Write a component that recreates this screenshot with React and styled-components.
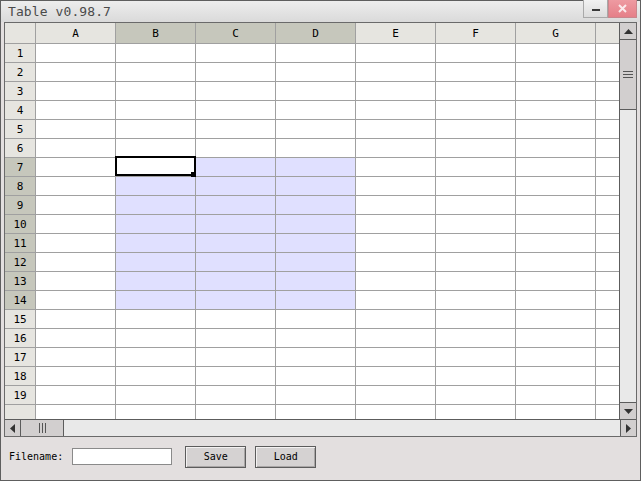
import React from 'react'
import styled, { createGlobalStyle } from 'styled-components'

const GlobalStyle = createGlobalStyle`
    html, body {
        margin: 0;
        padding: 0;
        background: #ffffff;
    }
    * {
        box-sizing: border-box;
    }
`;

const COLS = ['A', 'B', 'C', 'D', 'E', 'F', 'G']
const ROWS = Array.from({ length: 19 }, (_, i) => i + 1)

// selection B7:D14, active cell B7
const SEL = { c0: 1, c1: 3, r0: 7, r1: 14 }

const inSel = (c, r) => c >= SEL.c0 && c <= SEL.c1 && r >= SEL.r0 && r <= SEL.r1
const isActive = (c, r) => c === SEL.c0 && r === SEL.r0

function App() {
    return (
        <>
            <GlobalStyle />
            <Window>
                <TitleBar>
                    <Title>Table v0.98.7</Title>
                    <WinButtons>
                        <MinButton><span /></MinButton>
                        <CloseButton>
                            <svg width="9" height="9" viewBox="0 0 9 9">
                                <path d="M1 1 L8 8 M8 1 L1 8" stroke="#fbe9eb" strokeWidth="2" />
                            </svg>
                        </CloseButton>
                    </WinButtons>
                </TitleBar>

                <Frame>
                    <ScrollArea>
                        <Sheet>
                            <Corner />
                            {COLS.map((c, i) => (
                                <ColHead key={c} $sel={i >= SEL.c0 && i <= SEL.c1}>{c}</ColHead>
                            ))}
                            <ColHead $last />
                            {ROWS.map(r => (
                                <React.Fragment key={r}>
                                    <RowHead $sel={r >= SEL.r0 && r <= SEL.r1}>{r}</RowHead>
                                    {COLS.map((c, i) => (
                                        <Cell key={c} $sel={inSel(i, r)} $active={isActive(i, r)} />
                                    ))}
                                    <Cell $last />
                                </React.Fragment>
                            ))}
                            <RowHead $partial />
                            {COLS.map(c => <Cell key={c} $partial />)}
                            <Cell $last $partial />
                        </Sheet>

                        <VScroll>
                            <ArrowButton>
                                <svg width="9" height="5" viewBox="0 0 9 5"><path d="M0 5 L4.5 0 L9 5 Z" fill="#333" /></svg>
                            </ArrowButton>
                            <VThumb>
                                <svg width="10" height="7" viewBox="0 0 10 7">
                                    <path d="M0 0.5 H10 M0 3.5 H10 M0 6.5 H10" stroke="#555" strokeWidth="1" />
                                </svg>
                            </VThumb>
                            <Trough />
                            <ArrowButton $bottom>
                                <svg width="9" height="5" viewBox="0 0 9 5"><path d="M0 0 L4.5 5 L9 0 Z" fill="#333" /></svg>
                            </ArrowButton>
                        </VScroll>
                    </ScrollArea>

                    <HScroll>
                        <HArrow>
                            <svg width="5" height="9" viewBox="0 0 5 9"><path d="M5 0 L0 4.5 L5 9 Z" fill="#333" /></svg>
                        </HArrow>
                        <HThumb>
                            <svg width="7" height="10" viewBox="0 0 7 10">
                                <path d="M0.5 0 V10 M3.5 0 V10 M6.5 0 V10" stroke="#555" strokeWidth="1" />
                            </svg>
                        </HThumb>
                        <Trough />
                        <HArrow $right>
                            <svg width="5" height="9" viewBox="0 0 5 9"><path d="M0 0 L5 4.5 L0 9 Z" fill="#333" /></svg>
                        </HArrow>
                    </HScroll>
                </Frame>

                <FormBar>
                    <Label>Filename:</Label>
                    <FileInput type="text" defaultValue="" />
                    <Button $first>Save</Button>
                    <Button>Load</Button>
                </FormBar>
            </Window>
        </>
    )
}

const mono = `"DejaVu Sans Mono", "Liberation Mono", monospace`

const Window = styled.div`
    width: 641px;
    height: 481px;
    border: 1px solid #5e5e5e;
    background: #e3dfdf;
    display: flex;
    flex-direction: column;
    padding: 0 3px 0 3px;
`;

const TitleBar = styled.div`
    height: 21px;
    margin: 0 -3px;
    display: flex;
    justify-content: space-between;
    background: linear-gradient(#ededed, #dadada);
`;

const Title = styled.div`
    font-family: ${mono};
    font-size: 13px;
    color: #4a4a4a;
    padding: 3px 0 0 7px;
    letter-spacing: 0.1px;
`;

const WinButtons = styled.div`
    display: flex;
    height: 18px;
    margin-right: 3px;
    margin-top: -1px;
`;

const MinButton = styled.div`
    width: 25px;
    height: 18px;
    background: linear-gradient(#f2f2f2, #dcdcdc);
    border: 1px solid #a9a9a9;
    border-top: none;
    display: flex;
    align-items: center;
    justify-content: center;
    span {
        display: block;
        width: 8px;
        height: 2px;
        margin-top: 3px;
        background: #3a3a3a;
    }
`;

const CloseButton = styled.div`
    width: 29px;
    height: 18px;
    background: linear-gradient(#ee9aa1, #e57f88);
    border: 1px solid #c9868c;
    border-top: none;
    display: flex;
    align-items: center;
    justify-content: center;
`;

const Frame = styled.div`
    border: 1px solid #6a6a6a;
    display: flex;
    flex-direction: column;
`;

const ScrollArea = styled.div`
    display: flex;
    height: 396px;
`;

const Sheet = styled.div`
    display: grid;
    grid-template-columns: 31px repeat(7, 80px) 23px;
    grid-template-rows: 21px repeat(19, 19px) 14px;
    background: #ffffff;
    font-family: ${mono};
    font-size: 11px;
    color: #000;
`;

const headBase = `
    display: flex;
    align-items: center;
    justify-content: center;
    border-right: 1px solid #a0a0a0;
    border-bottom: 1px solid #a0a0a0;
`;

const Corner = styled.div`
    ${headBase}
    background: #e6e5e0;
`;

const ColHead = styled.div`
    ${headBase}
    background: ${p => (p.$sel ? '#c6c7bc' : '#e6e5e0')};
    border-right: ${p => (p.$last ? 'none' : '1px solid #a0a0a0')};
`;

const RowHead = styled.div`
    ${headBase}
    background: ${p => (p.$sel ? '#c6c7bc' : '#e6e5e0')};
    border-bottom: ${p => (p.$partial ? 'none' : '1px solid #a0a0a0')};
    padding-top: 1px;
`;

const Cell = styled.div`
    position: relative;
    background: ${p => (p.$sel && !p.$active ? '#e0e0ff' : '#ffffff')};
    border-right: ${p => (p.$last ? 'none' : '1px solid #a0a0a0')};
    border-bottom: ${p => (p.$partial ? 'none' : '1px solid #a0a0a0')};

    ${p => p.$active && `
        &::after {
            content: '';
            position: absolute;
            left: -1px;
            top: -2px;
            right: -1px;
            bottom: 0px;
            border: 2px solid #000;
        }
        &::before {
            content: '';
            position: absolute;
            right: -1px;
            bottom: -1px;
            width: 5px;
            height: 5px;
            background: #000;
            z-index: 1;
        }
    `}
`;

const VScroll = styled.div`
    width: 17px;
    border-left: 1px solid #5c5c5c;
    display: flex;
    flex-direction: column;
    background: #e9e9e9;
`;

const ArrowButton = styled.div`
    height: 17px;
    flex: none;
    background: #d2cfcf;
    border-top: ${p => (p.$bottom ? '1px solid #5c5c5c' : 'none')};
    border-bottom: ${p => (p.$bottom ? 'none' : '1px solid #5c5c5c')};
    display: flex;
    align-items: center;
    justify-content: center;
`;

const VThumb = styled.div`
    height: 70px;
    flex: none;
    background: #d2cfcf;
    border-bottom: 1px solid #5c5c5c;
    display: flex;
    align-items: center;
    justify-content: center;
`;

const Trough = styled.div`
    flex: 1;
    background: #e9e9e9;
`;

const HScroll = styled.div`
    height: 17px;
    border-top: 1px solid #5c5c5c;
    display: flex;
    background: #e9e9e9;
`;

const HArrow = styled.div`
    width: 16px;
    flex: none;
    background: #d2cfcf;
    border-right: ${p => (p.$right ? 'none' : '1px solid #5c5c5c')};
    border-left: ${p => (p.$right ? '1px solid #5c5c5c' : 'none')};
    display: flex;
    align-items: center;
    justify-content: center;
`;

const HThumb = styled.div`
    width: 43px;
    flex: none;
    background: #d2cfcf;
    border-right: 1px solid #5c5c5c;
    display: flex;
    align-items: center;
    justify-content: center;
`;

const FormBar = styled.div`
    flex: 1;
    display: flex;
    align-items: center;
    margin: 0 -3px;
    padding: 0 0 4px 8px;
    font-family: ${mono};
    font-size: 10px;
    color: #000;
`;

const Label = styled.span`
    margin-right: 9px;
`;

const FileInput = styled.input`
    width: 100px;
    height: 17px;
    border: 1px solid #8a8a8a;
    background: #fff;
    padding: 0 2px;
    font-family: ${mono};
    font-size: 10px;
    outline: none;
`;

const Button = styled.button`
    width: 61px;
    height: 22px;
    margin-left: ${p => (p.$first ? '13px' : '9px')};
    background: #d5d2d2;
    border: 1px solid #5c5c5c;
    box-shadow: inset 1px 1px 0 #f4f2f2, inset -1px -1px 0 #a9a6a6;
    font-family: ${mono};
    font-size: 10px;
    color: #000;
    padding: 0;
    cursor: default;
`;

export default App
